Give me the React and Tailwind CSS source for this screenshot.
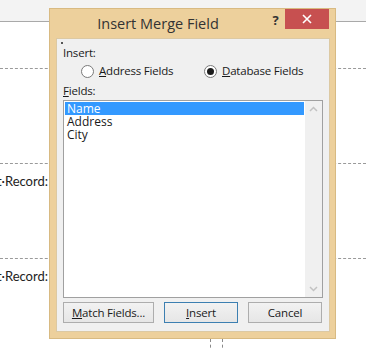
import React from 'react';

const ui = { fontFamily: '"Open Sans", "Noto Sans", sans-serif' };
const doc = { fontFamily: 'Lato, "Liberation Sans", sans-serif' };

function Radio({ checked, label, hotkey }) {
  return (
    <label className="flex items-center gap-[5px]">
      <span className="w-[13px] h-[13px] rounded-full border border-[#7a7a7a] bg-white flex items-center justify-center">
        {checked && <span className="w-[7px] h-[7px] rounded-full bg-[#1c1c1c]" />}
      </span>
      <span>
        <u>{hotkey}</u>
        {label}
      </span>
    </label>
  );
}

function Btn({ children, primary, w }) {
  return (
    <button
      className={
        'h-[21px] flex items-center justify-center border bg-gradient-to-b from-[#f2f2f2] to-[#e6e6e6] text-[#1a1a1a] ' +
        (primary ? 'border-[#3c7fb1] ' : 'border-[#adadad] ') +
        w
      }
    >
      {children}
    </button>
  );
}

export default function App() {
  return (
    <div className="relative w-[366px] h-[349px] overflow-hidden bg-white" style={ui}>
      {/* document behind the dialog */}
      <div className="flex flex-col">
        <div className="h-[22px] bg-[#f3f3f3] border-b border-[#a9a9a9]" />
        <div className="h-[47px] border-b border-dashed border-[#9a9a9a]" />
        <div className="h-[95px] border-b border-dashed border-[#9a9a9a]" />
        <div className="h-[36px] flex items-center justify-end pr-[318px] text-[13px] text-[#222] whitespace-nowrap" style={doc}>
          Next·Record:
        </div>
        <div className="h-[59px] border-b border-dashed border-[#9a9a9a]" />
        <div className="h-[36px] flex items-center justify-end pr-[318px] text-[13px] text-[#222] whitespace-nowrap" style={doc}>
          Next·Record:
        </div>
        <div className="h-[44px]" />
        <div className="flex h-[20px] pl-[210px] gap-[11px]">
          <div className="border-l border-dashed border-[#8a8a8a]" />
          <div className="border-l border-dashed border-[#8a8a8a]" />
        </div>
      </div>

      {/* dialog */}
      <div className="absolute left-[49px] top-[8px] w-[287px] h-[331px] bg-[#edd09c] border border-[#d8ba82] flex flex-col">
        <div className="h-[29px] flex items-start">
          <div className="w-[216px] h-[30px] flex items-center justify-center text-[14.5px] text-[#333]">
            Insert Merge Field
          </div>
          <div className="w-[19px] h-[22px] flex items-center justify-center text-[13px] font-bold text-[#333] pt-[2px]">?</div>
          <div className="w-[44px] h-[20px] bg-[#c75050] flex items-center justify-center">
            <svg width="10" height="10" viewBox="0 0 10 10">
              <path d="M1 1L9 9M9 1L1 9" stroke="#fff" strokeWidth="1.6" />
            </svg>
          </div>
        </div>
        <div className="ml-[6px] w-[274px] h-[294px] bg-[#f0f0f0] border border-[#dcc9a3] px-[6px] text-[11.5px] tracking-[-0.2px] text-[#1a1a1a] flex flex-col">
          <div className="w-[2px] h-[2px] bg-[#555] mt-[3px] -ml-[2px]" />
          <div className="mt-[1px] leading-[16px]">Insert:</div>
          <div className="flex h-[18px] items-center mt-[1px] leading-[16px]">
            <div className="ml-[18px] w-[123px]">
              <Radio label="ddress Fields" hotkey="A" />
            </div>
            <Radio checked label="atabase Fields" hotkey="D" />
          </div>
          <div className="mt-[3px] leading-[16px]">
            <u>F</u>ields:
          </div>
          <div className="mt-[1px] w-[260px] h-[198px] bg-white border border-[#a0a0a0] flex text-[12px] tracking-normal">
            <div className="flex-1 p-[1px] leading-[13px]">
              <div className="bg-[#3399ff] text-white px-[2px] h-[13px] flex items-center">Name</div>
              <div className="px-[2px] h-[13px] flex items-center">Address</div>
              <div className="px-[2px] h-[13px] flex items-center">City</div>
            </div>
            <div className="w-[17px] bg-[#f0f0f0] flex flex-col justify-between items-center py-[5px]">
              <svg width="9" height="6" viewBox="0 0 9 6">
                <path d="M1 5L4.5 1.5L8 5" stroke="#c2c2c2" strokeWidth="1.5" fill="none" />
              </svg>
              <svg width="9" height="6" viewBox="0 0 9 6">
                <path d="M1 1L4.5 4.5L8 1" stroke="#c2c2c2" strokeWidth="1.5" fill="none" />
              </svg>
            </div>
          </div>
          <div className="mt-[4px] flex gap-[10px]">
            <Btn w="w-[91px]">
              <span><u>M</u>atch Fields...</span>
            </Btn>
            <Btn primary w="w-[74px]">
              <span><u>I</u>nsert</span>
            </Btn>
            <Btn w="w-[74px]">Cancel</Btn>
          </div>
        </div>
      </div>
    </div>
  );
}
